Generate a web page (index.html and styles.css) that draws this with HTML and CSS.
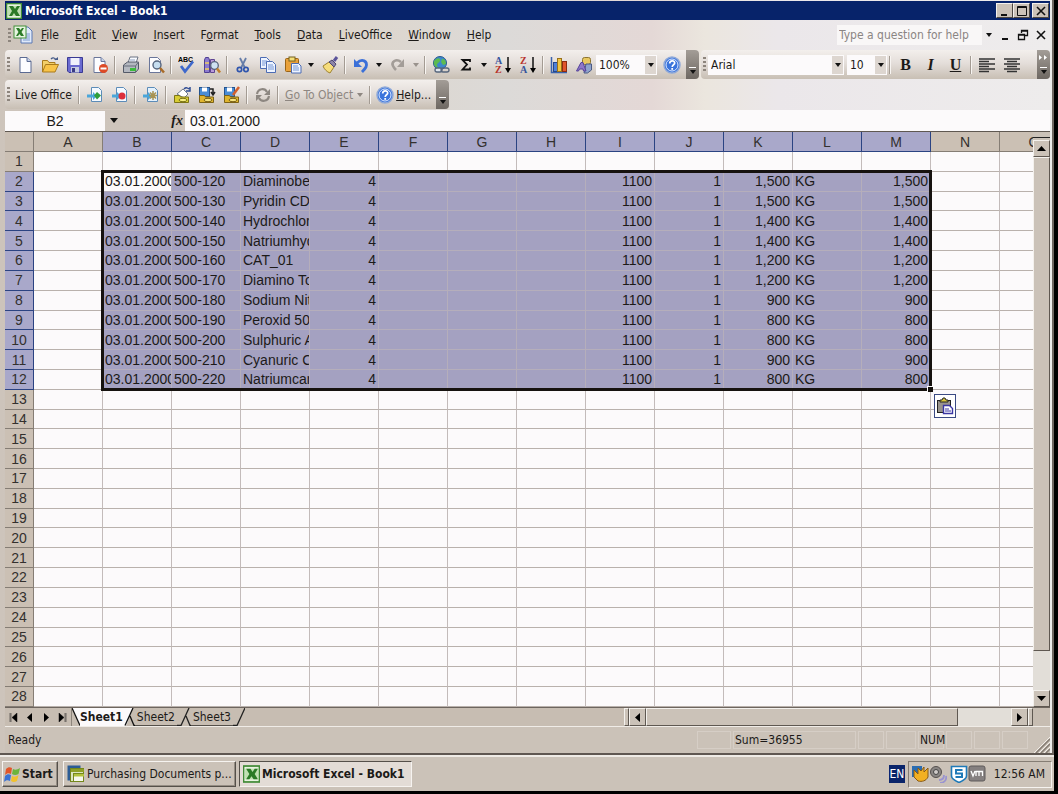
FILE: index.html
```
<!DOCTYPE html>
<html lang="en">
<head>
<meta charset="UTF-8">
<meta name="viewport" content="width=device-width, initial-scale=1.0">
<title>Microsoft Excel - Book1</title>
<link rel="stylesheet" href="styles.css">
</head>
<body>
<div class="window">
    <div class="titlebar">
        <svg class="xl" width="16" height="16" viewBox="0 0 16 16"><rect x="0.5" y="0.5" width="15" height="15" fill="#e8f4e0" stroke="#3f8a35" stroke-width="1.6"/><rect x="2" y="3" width="12" height="10" fill="#bfe0b0"/><path d="M3 3h4l2 3 2-3h3l-3 5 3 5h-4l-2-3-2 3H3l3-5z" fill="#2b7a26"/></svg>
        <h1>Microsoft Excel - Book1</h1>
        <button class="cap" aria-label="Minimize"><svg width="12" height="12"><rect x="2" y="9" width="6" height="2" fill="#111"/></svg></button>
        <button class="cap" aria-label="Maximize"><svg width="12" height="12"><path d="M1.5 1.5h9v9h-9zM1 2.5h10" fill="none" stroke="#111"/></svg></button>
        <button class="cap cap-close" aria-label="Close"><svg width="12" height="12"><path d="M2 2l8 8M10 2l-8 8" stroke="#111" stroke-width="1.6"/></svg></button>
    </div>

    <div class="menubar">
        <span class="grip"></span>
        <svg class="doc" width="20" height="20" viewBox="0 0 20 20"><path d="M8 2h7l4 4v12H8z" fill="#dfe9fa" stroke="#5b78b4"/><path d="M12 9h5M12 11h5M12 13h5M10 15h7" stroke="#7d9bd0"/><rect x="1" y="1" width="12" height="12" fill="#e6f4df" stroke="#43903a"/><path d="M3 3h3l1.500 2L9 3h2L8.500 7l2.500 4H8L6.500 9 5 11H3l2.500-4z" fill="#2b7a26"/></svg>
        <nav>
            <button><u>F</u>ile</button>
            <button><u>E</u>dit</button>
            <button><u>V</u>iew</button>
            <button><u>I</u>nsert</button>
            <button>F<u>o</u>rmat</button>
            <button><u>T</u>ools</button>
            <button><u>D</u>ata</button>
            <button><u>L</u>iveOffice</button>
            <button><u>W</u>indow</button>
            <button><u>H</u>elp</button>
        </nav>
        <input class="ask" type="text" aria-label="Help question" placeholder="Type a question for help">
        <button class="drop" aria-label="Recent questions"></button>
        <button class="mdi" aria-label="Minimize book"><svg width="12" height="12"><rect x="3" y="9" width="6" height="2" fill="#111"/></svg></button>
        <button class="mdi" aria-label="Restore book"><svg width="12" height="12"><path d="M4.500 4V1.500h6v5H8M4 2h7M1.500 5.500h6v5h-6zM1 6h7" fill="none" stroke="#111" stroke-width="1.300"/></svg></button>
        <button class="mdi" aria-label="Close book"><svg width="12" height="12"><path d="M2 2l8 8M10 2l-8 8" stroke="#111" stroke-width="1.6"/></svg></button>
    </div>

    <div class="bars">
        <div class="toolbar standard">
            <span class="grip"></span>
            <button class="tool" aria-label="New"><svg width="18" height="18"><path d="M4 1.500h7l4 4v11H4z" fill="#fdfdff" stroke="#5a6a92"/><path d="M11 1.500v4h4" fill="#c6d2ea" stroke="#5a6a92"/></svg></button>
            <button class="tool" aria-label="Open"><svg width="18" height="18"><path d="M1.500 16V4.500h5l1.500 2h6V9" fill="#f3cf6a" stroke="#a97a1c"/><path d="M1.500 16l3-7.500h13l-3.500 7.500z" fill="#f8c348" stroke="#a97a1c"/><path d="M10 3c2-2 4-1 5 1" fill="none" stroke="#445a88" stroke-width="1.300"/><path d="M13 4h4V1z" fill="#445a88"/></svg></button>
            <button class="tool" aria-label="Save"><svg width="18" height="18"><path d="M1.500 1.500h15v15H3l-1.500-1.500z" fill="#6a6ad0" stroke="#3a3a94"/><rect x="4.500" y="2" width="9" height="7" fill="#f0f2fc"/><rect x="5" y="11" width="8" height="5.500" fill="#c6cce0"/><rect x="6" y="12" width="3" height="4" fill="#3a3a84"/></svg></button>
            <button class="tool" aria-label="Permission"><svg width="18" height="18"><path d="M3 1.500h7l4 4v11H3z" fill="#fdfdff" stroke="#6a769a"/><path d="M10 1.500v4h4" fill="#c6d2ea" stroke="#6a769a"/><circle cx="12.500" cy="12.500" r="4.500" fill="#dd4a26"/><path d="M9.500 12.500h6" stroke="#fff" stroke-width="2"/></svg></button>
            <span class="sep"></span>
            <button class="tool" aria-label="Print"><svg width="18" height="18"><path d="M6 7l2-6h8l-2 6z" fill="#f8faff" stroke="#6c7484"/><path d="M8 4h5" stroke="#8fa0bd"/><path d="M1.500 9l4-3h11v7l-3 3.500h-12z" fill="#b4b8c0" stroke="#545a68"/><path d="M1.500 10h12v6M13.500 10l3-4" fill="none" stroke="#666d7a"/><rect x="8" y="12" width="6" height="3" fill="#3cbb3c"/></svg></button>
            <button class="tool" aria-label="Print preview"><svg width="18" height="18"><path d="M2.500 1.500h8l3 3v12h-11z" fill="#fdfdff" stroke="#6a769a"/><circle cx="10" cy="9" r="4" fill="#c6def0" stroke="#56657e" stroke-width="1.400"/><path d="M13 12l4 4.500" stroke="#a86b28" stroke-width="2.500"/></svg></button>
            <span class="sep"></span>
            <button class="tool" aria-label="Spelling"><svg width="18" height="18"><text x="0" y="6" font-size="7" font-weight="bold" font-family="Liberation Sans">ABC</text><path d="M3 10l4 5.500 8-10" fill="none" stroke="#3e68cc" stroke-width="2.800"/></svg></button>
            <button class="tool" aria-label="Research"><svg width="18" height="18"><path d="M1.500 4l1-2.500h3l1 2.500v12.500h-5z" fill="#8c7bd0" stroke="#504092"/><path d="M7.500 3.500h4v13h-4z" fill="#b89ad8" stroke="#5e4492"/><path d="M2 7h4M2 13h4" stroke="#f0cf60" stroke-width="1.500"/><circle cx="11.500" cy="9.500" r="3.800" fill="#cfe2f2" stroke="#59647c" stroke-width="1.300"/><path d="M14 12.500l3 4" stroke="#c2812f" stroke-width="2.500"/></svg></button>
            <span class="sep"></span>
            <button class="tool" aria-label="Cut"><svg width="18" height="18"><path d="M6 2l5 10M12 2L7 12" stroke="#667da8" stroke-width="1.800"/><circle cx="5.500" cy="13.500" r="2.200" fill="none" stroke="#2f55ad" stroke-width="1.700"/><circle cx="12" cy="13.500" r="2.200" fill="none" stroke="#2f55ad" stroke-width="1.700"/></svg></button>
            <button class="tool" aria-label="Copy"><svg width="18" height="18"><path d="M1.500 1.500h6l3 3v8h-9z" fill="#eef4ff" stroke="#4c6cb4"/><path d="M3 5h5M3 7h5M3 9h3" stroke="#7496d6"/><path d="M7.500 5.500h6l3 3v8h-9z" fill="#eef4ff" stroke="#4c6cb4"/><path d="M9 9h5M9 11h6M9 13h6" stroke="#7496d6"/></svg></button>
            <button class="tool" aria-label="Paste"><svg width="18" height="18"><rect x="1.500" y="2.500" width="13" height="13" rx="1" fill="#e9a13a" stroke="#9a6417"/><rect x="5" y="1" width="6" height="4" fill="#f3df7a" stroke="#75611f"/><path d="M7.500 7.500h7l2.500 2.500v7H7.500z" fill="#eef4ff" stroke="#4c6cb4"/><path d="M9 10h5M9 12h6M9 14h6" stroke="#7496d6"/></svg></button>
            <button class="drop" aria-label="Paste options"></button>
            <button class="tool" aria-label="Format painter"><svg width="18" height="18"><path d="M2 10l6-4 5 5-4 6c-3-1-6-4-7-7z" fill="#f6dd7c" stroke="#9e8130"/><path d="M8 6l3-2 4 4-2 3z" fill="#8c84a8" stroke="#4d4670"/><path d="M13 5l3-4" stroke="#5b549a" stroke-width="3"/></svg></button>
            <span class="sep"></span>
            <button class="tool" aria-label="Undo"><svg width="18" height="18"><path d="M5 7c5-5 11-2 9 4-1 2-2 3-4 5" fill="none" stroke="#3b70d8" stroke-width="2.800"/><path d="M2 3v8h8z" fill="#3b70d8"/></svg></button>
            <button class="drop" aria-label="Undo list"></button>
            <button class="tool" aria-label="Redo" disabled><svg width="18" height="18"><path d="M12 6C7 2 2 6 4 10c1 2 2 3 3 4" fill="none" stroke="#a39d98" stroke-width="2.600"/><path d="M15 3v8H8z" fill="#a39d98"/></svg></button>
            <button class="drop off" aria-label="Redo list" disabled></button>
            <span class="sep"></span>
            <button class="tool" aria-label="Hyperlink"><svg width="18" height="18"><circle cx="8" cy="7" r="6.500" fill="#3c88cc" stroke="#28588c"/><path d="M4 3c3-2 5 0 4 2s-3 2-3 4 2 2 1 3c-3-1-5-4-4-7zM10 3c3 0 4 2 4 5l-3 1-2-3z" fill="#5dbb50"/><rect x="3" y="12" width="7" height="4" rx="2" fill="#dfe6ee" stroke="#56657c" stroke-width="1.300"/><rect x="9" y="12" width="8" height="4" rx="2" fill="none" stroke="#56657c" stroke-width="1.300"/></svg></button>
            <button class="tool" aria-label="AutoSum"><svg width="18" height="18"><path d="M13 6V4H5.500l4.500 4.500-4.500 5H13v-2" fill="none" stroke="#111" stroke-width="1.800"/></svg></button>
            <button class="drop" aria-label="Sum functions"></button>
            <button class="tool" aria-label="Sort ascending"><svg width="18" height="18"><text x="1" y="8" class="sort-a">A</text><text x="1" y="17" class="sort-z">Z</text><path d="M14 1v14" stroke="#111" stroke-width="1.500"/><path d="M11 12h6l-3 5z"/></svg></button>
            <button class="tool" aria-label="Sort descending"><svg width="18" height="18"><text x="1" y="8" class="sort-z">Z</text><text x="1" y="17" class="sort-a">A</text><path d="M14 1v14" stroke="#111" stroke-width="1.500"/><path d="M11 12h6l-3 5z"/></svg></button>
            <span class="sep"></span>
            <button class="tool" aria-label="Chart wizard"><svg width="18" height="18"><path d="M1.500 1v15.500H17" fill="none" stroke="#3a62ac" stroke-width="1.500"/><rect x="3.500" y="6.500" width="4" height="9" fill="#4f80d8" stroke="#24468c"/><rect x="7.500" y="2.500" width="4" height="13" fill="#f3c541" stroke="#97701a"/><rect x="12.500" y="5.500" width="4" height="10" fill="#e0552c" stroke="#8c2c10"/></svg></button>
            <button class="tool" aria-label="Drawing"><svg width="18" height="18"><rect x="7.500" y="1.500" width="8" height="7" rx="2" fill="#e8c860" stroke="#8d7430"/><path d="M11 8h5.500v6l-4 3H9z" fill="#8fa3cc" stroke="#4a5a84"/><path d="M1.500 15L6 6.500h2L11 15H8.500L8 13H4.500l-1 2z" fill="#8e78c8" stroke="#55429a"/></svg></button>
            <span class="combo zoom">
                <select aria-label="Zoom"><option>100%</option></select>
            </span>
            <button class="tool" aria-label="Excel help"><svg width="18" height="18"><use href="#helpball"/></svg></button>
            <button class="more" aria-label="Standard toolbar options"></button>
        </div>
        <div class="toolbar formatting">
            <span class="grip"></span>
            <span class="combo font">
                <select aria-label="Font"><option>Arial</option></select>
            </span>
            <span class="combo size">
                <select aria-label="Font size"><option>10</option></select>
            </span>
            <span class="sep"></span>
            <button class="tool letter" aria-label="Bold"><b>B</b></button>
            <button class="tool letter" aria-label="Italic"><i>I</i></button>
            <button class="tool letter" aria-label="Underline"><u>U</u></button>
            <span class="sep"></span>
            <button class="tool" aria-label="Align left"><svg width="18" height="18"><path d="M1 3h16M1 5.500h10M1 8h16M1 10.500h10M1 13h16M1 15.500h10" stroke="#333" stroke-width="1.400"/></svg></button>
            <button class="tool" aria-label="Center"><svg width="18" height="18"><path d="M1 3h16M4 5.500h10M1 8h16M4 10.500h10M1 13h16M4 15.500h10" stroke="#333" stroke-width="1.400"/></svg></button>
            <button class="more wide" aria-label="Formatting toolbar options"><svg width="9" height="5"><path d="M0 0l3 2.500L0 5zM5 0l3 2.500L5 5z" fill="#fff"/></svg></button>
        </div>
    </div>

    <div class="bars">
        <div class="toolbar live">
            <span class="grip"></span>
            <span class="live-name">Live Office</span>
            <span class="sep"></span>
            <button class="tool" aria-label="Insert document"><svg width="18" height="18"><path d="M5.500 1.500h7l3 3v11h-10z" fill="#f4f9ff" stroke="#5c8cb8"/><path d="M1 8.500h6V6l4 4-4 4v-2.500H1z" fill="#4aa6da"/><path d="M11 6l4 3.500-4 4-3-4z" fill="#2f9e3c"/></svg></button>
            <button class="tool" aria-label="Remove document"><svg width="18" height="18"><path d="M5.500 1.500h7l3 3v11h-10z" fill="#f4f9ff" stroke="#5c8cb8"/><path d="M1 8.500h5V6l4 4-4 4v-2.500H1z" fill="#4aa6da"/><circle cx="11" cy="10" r="3.500" fill="#dc2f3c"/></svg></button>
            <span class="sep"></span>
            <button class="tool" aria-label="Document settings"><svg width="18" height="18"><path d="M5.500 1.500h7l3 3v11h-10z" fill="#e4f1fc" stroke="#5c8cb8"/><path d="M1 8.500h5V6l4 4-4 4v-2.500H1z" fill="#4aa6da"/><path d="M11 5v9M7 9.500h8M8 6.500l6 6M14 6.500l-6 6" stroke="#a89454" stroke-width="1.500"/></svg></button>
            <span class="sep"></span>
            <button class="tool" aria-label="Open from repository"><svg width="18" height="18"><path d="M4 8l6-5 5 5-4 4z" fill="#fff" stroke="#707b8c"/><path d="M1.500 9.500h5l1 1.500h8v5.500h-14z" fill="#d8cd34" stroke="#7c7417"/><ellipse cx="10" cy="14" rx="4" ry="1.700" fill="#f6ee80" stroke="#7c7417"/><path d="M11 3c2-2 4-1 5 0M17 1v4h-4" fill="none" stroke="#2e4c94" stroke-width="1.500"/></svg></button>
            <button class="tool" aria-label="Save to repository"><svg width="18" height="18"><rect x="1.500" y="1.500" width="10" height="9" fill="#4a8cd4" stroke="#23528e"/><rect x="4" y="1.500" width="5" height="4" fill="#fff"/><path d="M1.500 9.500h5l1 1.500h8v5.500h-14z" fill="#e0b52e" stroke="#7c6217"/><ellipse cx="10" cy="14" rx="4" ry="1.700" fill="#f6e480" stroke="#7c6217"/><path d="M12 3h3v5M13 6l2 3 2-3" fill="none" stroke="#222" stroke-width="1.500"/></svg></button>
            <button class="tool" aria-label="Save as to repository"><svg width="18" height="18"><rect x="1.500" y="1.500" width="10" height="9" fill="#4a8cd4" stroke="#23528e"/><rect x="4" y="1.500" width="5" height="4" fill="#fff"/><path d="M1.500 9.500h5l1 1.500h8v5.500h-14z" fill="#e0b52e" stroke="#7c6217"/><ellipse cx="10" cy="14" rx="4" ry="1.700" fill="#f6e480" stroke="#7c6217"/><path d="M16 1l-6 8" stroke="#d4602c" stroke-width="2.500"/></svg></button>
            <span class="sep"></span>
            <button class="tool" aria-label="Refresh" disabled><svg width="18" height="18"><path d="M3 8c1-6 8-6 10-2M15 10c-1 6-8 6-10 2" fill="none" stroke="#8d8781" stroke-width="2.200"/><path d="M16 3v6h-6zM2 15V9h6z" fill="#8d8781"/></svg></button>
            <span class="sep"></span>
            <button class="goto" disabled><span><u>G</u>o To Object</span></button>
            <span class="sep"></span>
            <button class="livehelp"><svg width="18" height="18"><g id="helpball"><circle cx="9" cy="9" r="8" fill="#3a74dc" stroke="#8fa9d8" stroke-width="1.500"/><circle cx="9" cy="9" r="6" fill="none" stroke="#dce8ff"/><path d="M6.700 7.500c0-3.500 5-3.500 5-.5 0 1.800-2.500 1.800-2.500 4" fill="none" stroke="#fff" stroke-width="1.700"/><rect x="8.300" y="12" width="1.800" height="1.800" fill="#fff"/></g></svg><span><u>H</u>elp...</span></button>
            <button class="more" aria-label="Live Office toolbar options"></button>
        </div>
    </div>

    <div class="formulabar">
        <input class="namebox" type="text" aria-label="Name box" value="B2">
        <button class="drop" aria-label="Names"></button>
        <button class="fx" aria-label="Insert function"><i>f</i><i>x</i></button>
        <input class="formula" type="text" aria-label="Formula" value="03.01.2000">
    </div>

    <div class="book">
        <div class="sheet">
            <table>
                <thead><tr id="colHeads"></tr></thead>
                <tbody id="cells"></tbody>
            </table>
            <div class="range" id="range">
                <span class="handle"></span>
                <button class="pasteopt" aria-label="Paste options"><svg width="18" height="18"><rect x="1.500" y="3.500" width="13" height="12" fill="#98938c" stroke="#222"/><path d="M4 5V3h2l1-2h2l1 2h2v2z" fill="#d8c63c" stroke="#222"/><path d="M7.500 8.500h6l3 3v5h-9z" fill="#fff" stroke="#3b36a4" stroke-width="1.400"/><path d="M9 12h4M9 14h6" stroke="#3b36a4"/></svg></button>
            </div>
        </div>
        <div class="vscroll">
            <span class="split"></span>
            <button aria-label="Scroll up"><svg width="9" height="5"><path d="M0 5l4.500-5L9 5z"/></svg></button>
            <span class="thumb"></span>
            <span class="track"></span>
            <button aria-label="Scroll down"><svg width="9" height="5"><path d="M0 0l4.500 5L9 0z"/></svg></button>
        </div>
    </div>

    <div class="tabrow">
        <div class="tabnav">
            <button aria-label="First sheet"><svg width="9" height="9"><path d="M1 0v9M2 0v9M8 0v9L3 4.500z" stroke="#111" stroke-width="0.500"/></svg></button>
            <button aria-label="Previous sheet"><svg width="9" height="9"><path d="M7 0v9L2 4.500z"/></svg></button>
            <button aria-label="Next sheet"><svg width="9" height="9"><path d="M2 0v9l5-4.500z"/></svg></button>
            <button aria-label="Last sheet"><svg width="9" height="9"><path d="M8 0v9M7 0v9M1 0v9l5-4.500z" stroke="#111" stroke-width="0.500"/></svg></button>
        </div>
        <div class="tabs">
            <svg width="8" height="18"><path d="M0 0h8v18z" fill="#fcfafb"/><path d="M0 0l8 17.500" stroke="#111" stroke-width="1.300"/></svg>
            <button class="tab current">Sheet1</button>
            <svg width="12" height="18"><path d="M0 0h10L3 18H0z" fill="#fcfafb"/><path d="M10 0L2 17.500M7 8l4 9.500h1" fill="none" stroke="#111" stroke-width="1.300"/></svg>
            <button class="tab">Sheet2</button>
            <svg width="14" height="18"><path d="M12 0L4 17.500H0M9 8l4 9.500h1" fill="none" stroke="#222" stroke-width="1.300"/></svg>
            <button class="tab">Sheet3</button>
            <svg width="12" height="18"><path d="M12 0L4 17.500H0" fill="none" stroke="#222" stroke-width="1.300"/></svg>
        </div>
        <div class="hscroll">
            <span class="split"></span>
            <button aria-label="Scroll left"><svg width="5" height="9"><path d="M5 0v9L0 4.500z"/></svg></button>
            <span class="thumb"></span>
            <span class="track"></span>
            <button aria-label="Scroll right"><svg width="5" height="9"><path d="M0 0v9l5-4.500z"/></svg></button>
            <span class="split"></span>
        </div>
    </div>

    <div class="status">
        <span class="ready">Ready</span>
        <span class="pane p-m"></span>
        <span class="pane p-sum">Sum=36955</span>
        <span class="pane p-xs"></span>
        <span class="pane p-s"></span>
        <span class="pane p-xs">NUM</span>
        <span class="pane p-xs"></span>
        <span class="pane p-xs"></span>
        <span class="pane p-xs"></span>
        <svg class="corner" width="16" height="16"><path d="M2 16L16 2M7 16l9-9M12 16l4-4" stroke="#857c72" stroke-width="1.500"/><path d="M0 16L16 0M5 16L16 5M10 16l6-6" stroke="#f3efea"/></svg>
    </div>
</div>

<div class="taskbar">
    <button class="start"><svg width="18" height="18"><path d="M2 4c2-2 4-2 6-1L7 9C5 8 3 8 1 10z" fill="#e2562a"/><path d="M9 4c2 1 4 1 7-1l-1.500 6c-2 1-4 1.500-6.500 0z" fill="#6cb43c"/><path d="M1 11c2-2 4-2 6-1l-1 6c-2-1-4-1-6 1z" fill="#3a72d4"/><path d="M8 11c2 1 4 1 6.500-1L13 16c-2 1-4 1.500-6 0z" fill="#f2c12c"/></svg>Start</button>
    <button class="task"><svg width="18" height="18"><rect x="0.500" y="0.500" width="13" height="15" fill="#2c5c94"/><rect x="3.500" y="3.500" width="13" height="13" fill="#dce6c0" stroke="#74871c"/><rect x="4" y="4" width="13" height="3" fill="#8ea024"/><rect x="6.500" y="8.500" width="10" height="8" fill="#f6f8ee" stroke="#74871c"/><rect x="7" y="9" width="10" height="2.500" fill="#b2c23c"/></svg>Purchasing Documents p...</button>
    <button class="task active"><svg width="17" height="18" viewBox="0 0 16 16"><rect x="0.5" y="0.5" width="15" height="15" fill="#e8f4e0" stroke="#3f8a35" stroke-width="1.6"/><rect x="2" y="3" width="12" height="10" fill="#bfe0b0"/><path d="M3 3h4l2 3 2-3h3l-3 5 3 5h-4l-2-3-2 3H3l3-5z" fill="#2b7a26"/></svg>Microsoft Excel - Book1</button>
    <span class="lang">EN</span>
    <div class="tray">
        <svg width="18" height="18"><rect x="1" y="1" width="10" height="11" fill="#2b6cb0"/><path d="M3 5l4 4V3l3 3 3-4v5l4-4v9c-2 4-6 5-10 4l-4-4z" fill="#f2b022" stroke="#8a5a12"/></svg>
        <svg width="18" height="18"><circle cx="7" cy="7" r="5.500" fill="#8a8684" stroke="#55504e"/><circle cx="7" cy="7" r="2.500" fill="#d0ccca" stroke="#444"/><path d="M10 15c3 0 5-2 5-5M11 18c4 0 7-3 6-7" fill="none" stroke="#9a94d0" stroke-width="1.800"/></svg>
        <svg class="shield" width="18" height="18"><path d="M1.500 1.500h15V11c0 3-4 5-7.500 6.500C5.500 16 1.500 14 1.500 11z" fill="#fff" stroke="#1f7ab8" stroke-width="1.600"/><path d="M12.500 5H6v3.500h6V12H5.500" fill="none" stroke="#1f7ab8" stroke-width="2"/></svg>
        <svg width="18" height="18"><rect x="1" y="1" width="16" height="15" rx="2" fill="#858080" stroke="#5f5a5a"/><path d="M3 6l2 5 2-5M8 11V6.500h3V11M11 6.500h3.500V11" fill="none" stroke="#fff" stroke-width="1.300"/></svg>
        <span class="clock">12:56 AM</span>
    </div>
</div>

<script>
    const columns = "ABCDEFGHIJKLMNO".split("");
    const rowCount = 28;
    const materials = [
        ["500-120", "Diaminobe", "1,500"],
        ["500-130", "Pyridin CD", "1,500"],
        ["500-140", "Hydrochlor", "1,400"],
        ["500-150", "Natriumhyd", "1,400"],
        ["500-160", "CAT_01", "1,200"],
        ["500-170", "Diamino To", "1,200"],
        ["500-180", "Sodium Nit", "900"],
        ["500-190", "Peroxid 50", "800"],
        ["500-200", "Sulphuric A", "800"],
        ["500-210", "Cyanuric C", "900"],
        ["500-220", "Natriumcar", "800"]
    ];

    function cellText(column, item) {
        const values = {
            B: "03.01.2000", C: item[0], D: item[1], E: "4",
            I: "1100", J: "1", K: item[2], L: "KG", M: item[2]
        };
        return values[column] || "";
    }

    function isPicked(column) {
        return column >= "B" && column <= "M";
    }

    function renderSheet() {
        const heads = document.getElementById("colHeads");
        heads.appendChild(document.createElement("th")).className = "rowhead";
        columns.forEach((column) => {
            const th = document.createElement("th");
            th.textContent = column;
            if (isPicked(column)) th.className = "picked";
            heads.appendChild(th);
        });
        for (let row = 1; row <= rowCount; row++) {
            const tr = document.createElement("tr");
            const item = materials[row - 2];
            const th = document.createElement("th");
            th.textContent = row;
            if (item) th.className = "picked";
            tr.appendChild(th);
            columns.forEach((column) => {
                const td = document.createElement("td");
                td.id = column + row;
                if (item && isPicked(column)) {
                    td.textContent = cellText(column, item);
                    td.classList.add("picked");
                    if ("EIJKM".includes(column)) td.classList.add("num");
                }
                tr.appendChild(td);
            });
            document.getElementById("cells").appendChild(tr);
        }
        document.getElementById("B2").classList.add("cursor");
    }

    // the frame sits on the cell borders round B2:M12
    function placeRange() {
        const sheet = document.querySelector(".sheet").getBoundingClientRect();
        const first = document.getElementById("B2").getBoundingClientRect();
        const last = document.getElementById("M12").getBoundingClientRect();
        const range = document.getElementById("range");
        range.style.left = Math.round(first.left - sheet.left - 2) + "px";
        range.style.top = Math.round(first.top - sheet.top - 2) + "px";
        range.style.width = Math.round(last.right - first.left + 3) + "px";
        range.style.height = Math.round(last.bottom - first.top + 3) + "px";
    }

    renderSheet();
    placeRange();
    window.addEventListener("resize", placeRange);
</script>
</body>
</html>
```
FILE: styles.css
```
* {
    box-sizing: border-box;
}

body {
    margin: 0;
    height: 100vh;
    padding: 0 4px 3px 0;
    display: flex;
    flex-direction: column;
    background-color: #000;
    font-family: "DejaVu Sans Condensed", "Noto Sans", sans-serif;
    font-size: 12px;
    color: #1c1a18;
    overflow: hidden;
}

button, input, select {
    font: inherit;
    color: inherit;
    margin: 0;
    padding: 0;
    border: none;
    border-radius: 0;
    background: none;
}

svg {
    display: block;
    flex: none;
}

.window {
    flex: 1;
    min-height: 0;
    display: flex;
    flex-direction: column;
    padding: 1px 2px 0 5px;
    border-right: 2px solid #6f6862;
    border-bottom: 2px solid #5f5751;
    background: linear-gradient(90deg, #cdc4bb 0, #d6cbc3 15%, #ddd5cb 32%, #dcdad8 48%, #e4d8d6 62%, #ebe6de 67%, #ebe7ea 74%, #eeecec 100%);
}

.titlebar {
    display: flex;
    align-items: center;
    height: 19px;
    flex: none;
    padding: 0 1px;
    background-color: #07236a;
    color: #fff;
}

.titlebar h1 {
    flex: 1;
    margin: 0;
    padding-left: 3px;
    font-size: 12px;
    font-weight: bold;
}

.cap {
    width: 17px;
    height: 15px;
    display: flex;
    align-items: center;
    justify-content: center;
    background-color: #cbc2b8;
    border: 1px solid;
    border-color: #f4f1ed #4d4741 #4d4741 #f4f1ed;
}

.cap-close {
    margin-left: 2px;
}

.menubar {
    display: flex;
    align-items: center;
    height: 30px;
    flex: none;
}

.grip {
    flex: none;
    width: 3px;
    height: 15px;
    margin: 0 2px 0 3px;
    background: repeating-linear-gradient(#8d857d 0 2px, transparent 2px 4px);
}

.menubar nav {
    flex: 1;
    display: flex;
}

.menubar nav button {
    padding: 0 8px;
    white-space: nowrap;
}

.ask {
    width: 145px;
    height: 20px;
    padding: 0 2px;
    background-color: #f9f7f7;
}

.ask::placeholder {
    color: #8b8583;
    opacity: 1;
}

.drop {
    flex: none;
    width: 12px;
    height: 22px;
    display: flex;
    align-items: center;
    justify-content: center;
}

.drop::after {
    content: "";
    border: 3px solid transparent;
    border-top: 4px solid #111;
    border-bottom: 0;
}

.drop.off::after {
    border-top-color: #99928c;
}

.menubar .drop {
    width: 14px;
}

.mdi {
    width: 18px;
    display: flex;
    justify-content: center;
}

.bars {
    display: flex;
    justify-content: space-between;
    flex: none;
    height: 30px;
}

.toolbar {
    display: flex;
    align-items: center;
    height: 29px;
    border-radius: 4px;
    background: linear-gradient(#f3efec, #e4deda 45%, #c8bfb4);
}

.toolbar .grip {
    margin: 0 2px;
}

.tool {
    flex: none;
    width: 25px;
    height: 24px;
    display: flex;
    align-items: center;
    justify-content: center;
}

.sort-a,
.sort-z {
    font: bold 10px "Liberation Serif", serif;
    fill: #35549c;
}

.sort-z {
    fill: #b8322c;
}

.letter {
    font: bold 16px "Liberation Serif", serif;
}

.sep {
    flex: none;
    width: 6px;
    height: 18px;
    background: linear-gradient(90deg, #a39b93 50%, #f8f5f2 50%) 2px 0 / 2px 100% no-repeat;
}

.combo {
    position: relative;
    flex: none;
    height: 20px;
    display: flex;
    background-color: #fcfafb;
}

.combo select {
    width: 100%;
    padding-left: 3px;
    appearance: none;
}

.combo::before {
    content: "";
    position: absolute;
    right: 1px;
    top: 1px;
    width: 11px;
    height: 18px;
    background-color: #ddd6d0;
    pointer-events: none;
}

.combo::after {
    content: "";
    position: absolute;
    right: 3px;
    top: 8px;
    border: 3px solid transparent;
    border-top: 4px solid #111;
    border-bottom: 0;
    pointer-events: none;
}

.zoom {
    width: 61px;
    margin-right: 2px;
}

.font {
    width: 136px;
    margin-right: 3px;
}

.size {
    width: 40px;
}

.formatting {
    width: 349px;
}

.more {
    flex: none;
    width: 13px;
    height: 29px;
    margin-left: 2px;
    display: flex;
    flex-direction: column;
    align-items: center;
    justify-content: flex-end;
    gap: 2px;
    padding: 5px 0;
    border-radius: 0 4px 4px 0;
    background: linear-gradient(#a39d97, #6e6862);
}

.more svg {
    order: -1;
    margin-bottom: auto;
}

.more::before {
    content: "";
    width: 7px;
    height: 1px;
    background-color: #fff;
}

.more::after {
    content: "";
    border: 3px solid transparent;
    border-top: 4px solid #111;
    border-bottom: 0;
}

.formatting .more {
    margin-left: auto;
}

.live-name {
    width: 64px;
    padding-left: 3px;
    white-space: nowrap;
}

.goto {
    display: flex;
    align-items: center;
    gap: 4px;
    padding: 0 4px;
    color: #8e8781;
    white-space: nowrap;
}

.goto::after {
    content: "";
    border: 3px solid transparent;
    border-top: 4px solid #8e8781;
    border-bottom: 0;
}

.livehelp {
    display: flex;
    align-items: center;
    gap: 2px;
    padding: 0 3px;
}

.formulabar {
    display: flex;
    align-items: center;
    flex: none;
    height: 21px;
    background: linear-gradient(90deg, #cdc4bb, #d6cbc3);
    font-family: "Liberation Sans", Arial, sans-serif;
    font-size: 14px;
}

.namebox {
    width: 100px;
    height: 20px;
    background-color: #fcfafb;
    text-align: center;
}

.formulabar .drop {
    width: 18px;
}

.formulabar .drop::after {
    border-width: 5px 4px 0;
}

.fx {
    width: 62px;
    padding-right: 2px;
    text-align: right;
    font: bold 14px "Liberation Serif", serif;
}

.formula {
    flex: 1;
    min-width: 0;
    height: 21px;
    padding: 0 5px;
    background-color: #fcfafb;
}

.book {
    flex: 1;
    min-height: 0;
    display: flex;
    border-top: 1px solid #5f5851;
    background-color: #cbc2b8;
    font-family: "Liberation Sans", Arial, sans-serif;
    font-size: 14px;
}

.sheet {
    position: relative;
    flex: 1;
    min-width: 0;
    overflow: hidden;
    background-color: #fcfafb;
}

.sheet table {
    width: 1064px;
    height: 100%;
    table-layout: fixed;
    border-spacing: 0;
}

.sheet th {
    height: 19px;
    padding: 0;
    font-weight: normal;
    line-height: 18px;
    color: #33302e;
    background-color: #cbc0b4;
    border-right: 1px solid #857d74;
    border-bottom: 1px solid #857d74;
}

.sheet thead th {
    width: 69px;
    height: 20px;
}

.sheet thead .rowhead {
    width: 29px;
}

.sheet th.picked {
    background-color: #a9a8ca;
    border-color: #2b4382;
}

.sheet td {
    padding: 0 2px;
    line-height: 18px;
    overflow: hidden;
    white-space: nowrap;
    border-right: 1px solid #c3bbba;
    border-bottom: 1px solid #b9b1ac;
}

.sheet td.picked {
    background-color: #a4a1c1;
    border-color: #b5aebb;
}

.sheet td.num {
    text-align: right;
}

.sheet td.cursor {
    background-color: #fcfafb;
}

.range {
    position: absolute;
    border: 3px solid #16120f;
    pointer-events: none;
}

.handle {
    position: absolute;
    right: -4px;
    bottom: -4px;
    width: 6px;
    height: 6px;
    background-color: #16120f;
    border: solid #fcfafb;
    border-width: 1px 0 0 1px;
}

.pasteopt {
    position: absolute;
    left: 100%;
    top: 100%;
    margin: 6px 0 0 5px;
    width: 22px;
    height: 24px;
    display: flex;
    align-items: center;
    justify-content: center;
    background-color: #fff;
    border: 1px solid #3b4a84;
}

.vscroll {
    display: flex;
    flex-direction: column;
    width: 17px;
    flex: none;
    padding-top: 5px;
    background-color: #cbc2b8;
}

.vscroll button,
.hscroll button,
.thumb,
.split {
    flex: none;
    background-color: #cbc2b8;
    border: 1px solid;
    border-color: #f4f1ed #5f5851 #5f5851 #f4f1ed;
}

.vscroll button,
.hscroll button {
    width: 17px;
    height: 17px;
    display: flex;
    align-items: center;
    justify-content: center;
}

.vscroll .split {
    height: 3px;
    border-color: #222;
    border-width: 1px 0 0;
}

.vscroll .thumb {
    flex: 494;
}

.vscroll .track {
    flex: 39;
}

.track {
    background-color: #e2ded8;
}

.tabrow {
    display: flex;
    flex: none;
    height: 20px;
    padding-right: 17px;
    border-top: 1px solid #6d655e;
    border-bottom: 1px solid #f0ece7;
    background-color: #c7bdb2;
}

.tabnav {
    display: flex;
    width: 67px;
    border-right: 1px solid #8d857c;
}

.tabnav button {
    flex: 1;
    display: flex;
    align-items: center;
    justify-content: center;
}

.tabs {
    flex: 1;
    display: flex;
}

.tab {
    height: 18px;
    padding: 0 2px;
    border-bottom: 1px solid #55504a;
    line-height: 18px;
}

.tab.current {
    padding: 0;
    font-weight: bold;
    background-color: #fcfafb;
    border-bottom-color: #fcfafb;
}

.hscroll {
    display: flex;
    width: 409px;
}

.hscroll button {
    height: 18px;
}

.hscroll .split {
    width: 5px;
    height: 18px;
}

.hscroll .thumb {
    flex: 311;
    height: 18px;
}

.hscroll .track {
    flex: 53;
}

.status {
    display: flex;
    align-items: center;
    flex: none;
    height: 26px;
    gap: 2px;
    background-color: #cbc2b8;
}

.ready {
    flex: 1;
    padding-left: 3px;
}

.pane {
    height: 18px;
    padding-left: 1px;
    line-height: 16px;
    border: 1px solid #d6cec6;
}

.p-xs {
    width: 26px;
}

.p-s {
    width: 30px;
}

.p-m {
    width: 34px;
}

.p-sum {
    width: 123px;
}

.corner {
    align-self: flex-end;
    margin-left: 4px;
}

.taskbar {
    display: flex;
    align-items: center;
    flex: none;
    height: 36px;
    padding: 0 2px;
    border-top: 2px solid #efebe6;
    background-color: #cbc2b8;
}

.start,
.task {
    display: flex;
    align-items: center;
    height: 26px;
    padding: 0 3px;
    gap: 2px;
    border: 1px solid;
    border-color: #f6f3f0 #55504a #55504a #f6f3f0;
    box-shadow: inset -1px -1px #958d84;
    white-space: nowrap;
}

.start {
    width: 56px;
    padding: 0 1px;
    margin-right: 5px;
    gap: 0;
    font-weight: bold;
}

.task {
    width: 173px;
    margin-right: 3px;
}

.task.active {
    font-weight: bold;
    background-color: #e3dcd6;
    border-color: #55504a #f6f3f0 #f6f3f0 #55504a;
    box-shadow: none;
}

.lang {
    margin-left: auto;
    width: 16px;
    height: 18px;
    line-height: 18px;
    text-align: center;
    background-color: #0a246a;
    color: #fff;
}

.tray {
    display: flex;
    align-items: center;
    width: 144px;
    height: 27px;
    margin-left: 3px;
    padding-left: 2px;
    border: 1px solid;
    border-color: #857d74 #f6f3f0 #f6f3f0 #857d74;
}

.shield {
    margin-left: 3px;
}

.clock {
    margin-left: auto;
    padding-right: 6px;
}
```
